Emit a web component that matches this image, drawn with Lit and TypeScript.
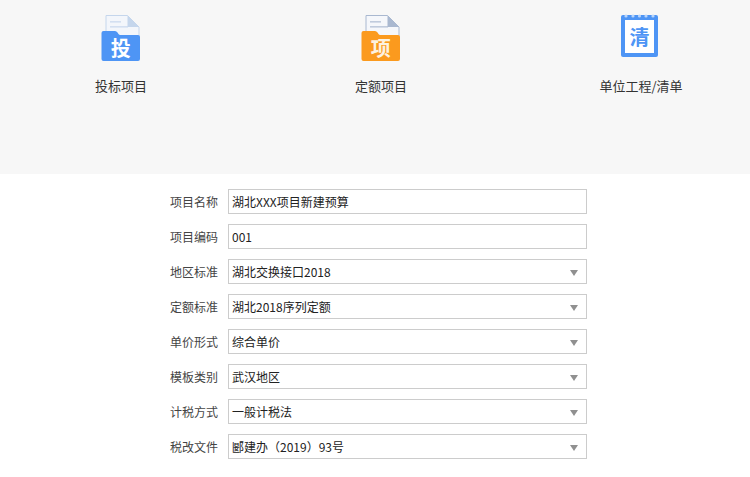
import { LitElement, html, css, svg } from "lit";
import { customElement } from "lit/decorators.js";

const FONT = `"Microsoft YaHei","Noto Sans CJK SC","Noto Sans",sans-serif`;

const folder = (main: string, flap: string, page: string, corner: string, ch: string) => html`
  <svg class="icon" width="48" height="48" viewBox="0 0 48 48">
    ${svg`
    <path d="M9 1.5 H30.5 L42 13 V30 H9 Z" fill="${page}" stroke="${corner}" stroke-width="1"/>
    <path d="M30.5 1.5 L42 13 H30.5 Z" fill="${corner}"/>
    <rect x="13" y="7" width="11" height="1.6" fill="${corner}" opacity=".7"/>
    <rect x="13" y="12" width="18" height="1.6" fill="${corner}" opacity=".7"/>
    <path d="M6 17.5 Q4.5 17.5 4.5 19 V56" fill="none"/>
    <path d="M6.5 17 H18 Q19.5 17 20.5 18.5 L21.5 20 Q22 21 23.5 21 H41 Q43 21 43 23 V45 Q43 47 41 47 H6.5 Q4.5 47 4.5 45 V19 Q4.5 17 6.5 17 Z" fill="${main}"/>
    <text x="23.7" y="42" text-anchor="middle" font-size="20" font-weight="700" fill="${flap}" font-family='${FONT}'>${ch}</text>
    `}
  </svg>`;

const notebook = html`
  <svg class="icon" width="48" height="48" viewBox="0 0 48 48">
    ${svg`
    <rect x="4" y="1" width="37" height="42" rx="2" fill="#4e95f5" transform="translate(0 0)"/>
    <rect x="4" y="17" width="37" height="41" rx="2" fill="#4e95f5" transform="translate(0 -1)" opacity="0"/>
    <circle cx="9" cy="2" r="1.6" fill="#b9d5fb"/>
    <circle cx="16" cy="2" r="1.6" fill="#b9d5fb"/>
    <circle cx="22.5" cy="2" r="1.6" fill="#b9d5fb"/>
    <circle cx="29" cy="2" r="1.6" fill="#b9d5fb"/>
    <circle cx="36" cy="2" r="1.6" fill="#b9d5fb"/>
    <rect x="8" y="6" width="29" height="33" fill="#fff"/>
    <text x="22.5" y="31" text-anchor="middle" font-size="20" font-weight="700" fill="#4e95f5" font-family='${FONT}'>清</text>
    `}
  </svg>`;

interface Field { label: string; value: string; select: boolean; }

const FIELDS: Field[] = [
  { label: "项目名称", value: "湖北XXX项目新建预算", select: false },
  { label: "项目编码", value: "001", select: false },
  { label: "地区标准", value: "湖北交换接口2018", select: true },
  { label: "定额标准", value: "湖北2018序列定额", select: true },
  { label: "单价形式", value: "综合单价", select: true },
  { label: "模板类别", value: "武汉地区", select: true },
  { label: "计税方式", value: "一般计税法", select: true },
  { label: "税改文件", value: "郾建办（2019）93号", select: true },
];

@customElement("app-root")
export class AppRoot extends LitElement {
  static styles = css`
    :host {
      display: block;
      width: 750px;
      height: 477px;
      background: #fff;
      font-family: ${css([FONT] as unknown as TemplateStringsArray)};
      color: #333;
      overflow: hidden;
    }
    .top {
      height: 174px;
      background: #f7f7f7;
      box-sizing: border-box;
      padding-top: 14px;
    }
    .types {
      display: grid;
      grid-template-columns: repeat(3, 260px);
      margin-left: -9px;
    }
    .type {
      display: flex;
      flex-direction: column;
      align-items: center;
      gap: 14px;
    }
    .icon { display: block; }
    .type span {
      font-size: 13px;
      line-height: 20px;
      color: #333;
    }
    .form {
      display: flex;
      flex-direction: column;
      gap: 10px;
      padding-top: 15px;
    }
    .row {
      display: flex;
      align-items: center;
      height: 25px;
    }
    .label {
      width: 228px;
      padding-right: 10px;
      box-sizing: border-box;
      text-align: right;
      font-size: 12px;
      color: #444;
    }
    .box {
      width: 359px;
      height: 25px;
      box-sizing: border-box;
      border: 1px solid #ccc;
      padding: 0 3px;
      display: flex;
      align-items: center;
      justify-content: space-between;
      font-size: 12px;
      color: #222;
      background: #fff;
    }
    .arrow {
      width: 0;
      height: 0;
      margin-right: 5px;
      margin-top: 2px;
      border-left: 4px solid transparent;
      border-right: 4px solid transparent;
      border-top: 6px solid #909090;
    }
  `;

  render() {
    return html`
      <div class="top">
        <div class="types">
          <div class="type">
            ${folder("#4e95f5", "#fff", "#f3f6fb", "#c5d6ec", "投")}
            <span>投标项目</span>
          </div>
          <div class="type">
            ${folder("#fb9a1e", "#fdf2e0", "#f5f7fb", "#a9b8d0", "项")}
            <span>定额项目</span>
          </div>
          <div class="type">
            ${notebook}
            <span>单位工程/清单</span>
          </div>
        </div>
      </div>
      <div class="form">
        ${FIELDS.map(
          (f) => html`
            <div class="row">
              <div class="label">${f.label}</div>
              <div class="box">
                <span>${f.value}</span>
                ${f.select ? html`<i class="arrow"></i>` : null}
              </div>
            </div>
          `
        )}
      </div>
    `;
  }
}
